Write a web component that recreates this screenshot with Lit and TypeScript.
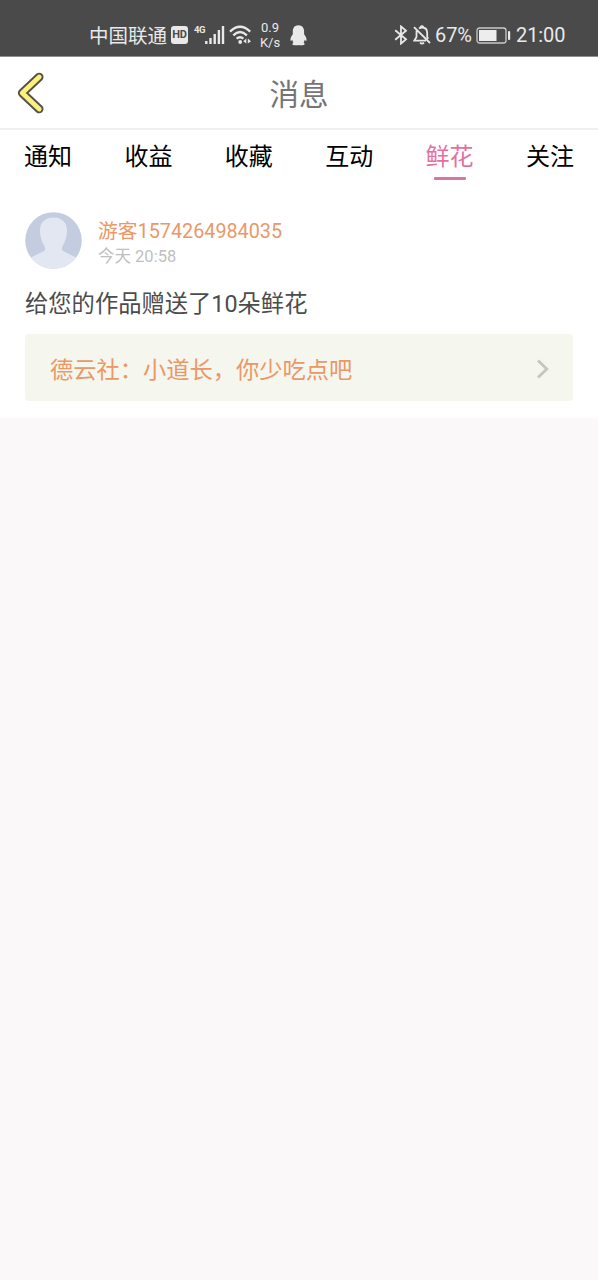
import { LitElement, html, css } from "lit";
import { customElement, property } from "lit/decorators.js";

@customElement("status-bar")
class StatusBar extends LitElement {
  static styles = css`
    :host {
      display: flex;
      align-items: center;
      box-sizing: border-box;
      height: 56px;
      padding: 14px 33px 0 89px;
      background: #4a4a4a;
      color: #e9e9e9;
      font-family: Roboto, "Noto Sans CJK SC", sans-serif;
      white-space: nowrap;
      line-height: 1;
    }
    svg { display: block; flex: none; }
    .carrier { font-size: 19.5px; width: 78px; padding-top: 3px; }
    .hd {
      width: 17px;
      height: 18px;
      margin-left: 4px;
      border-radius: 3px;
      background: #e9e9e9;
      color: #4a4a4a;
      font-size: 11px;
      font-weight: 700;
      line-height: 18px;
      text-align: center;
      letter-spacing: -0.2px;
    }
    .gen {
      width: 11px;
      margin-left: 6px;
      align-self: flex-start;
      padding-top: 11px;
      font-size: 9.5px;
      font-weight: 700;
      letter-spacing: -0.5px;
    }
    .wifi { margin-left: 4px; }
    .speed {
      width: 22px;
      margin-left: 7px;
      font-size: 13px;
      line-height: 15px;
      text-align: center;
    }
    .qq { margin-left: 9px; }
    .right { display: flex; align-items: center; margin-left: auto; }
    .bell { margin-left: 5px; }
    .num { font-size: 20px; letter-spacing: -0.1px; }
    .pct { width: 36px; margin-left: 4px; }
    .battery { margin-left: 5px; }
    .clock { width: 49px; margin-left: 5px; }
  `;

  render() {
    return html`
      <span class="carrier">中国联通</span>
      <span class="hd">HD</span>
      <span class="gen">4G</span>
      <svg width="20" height="20" viewBox="0 0 20 20" fill="none" stroke="#e9e9e9">
        <path d="M1.300 16v3M5.500 13v6M9.700 9v10M13.900 5v14M18 1v18" stroke-width="2.400" />
      </svg>
      <svg class="wifi" width="23" height="20" viewBox="0 0 23 20" fill="none" stroke="#e9e9e9">
        <path d="M1 6.600Q11 -3 21.200 6.600M4.300 10.300Q11 3.800 17.900 10.300M7.600 13.700Q11 10.700 14.400 13.700" stroke-width="2.300" />
        <circle cx="11.200" cy="17" r="1.900" fill="#e9e9e9" stroke="none" />
        <path d="M17.300 13.500v5l-3-2.300zM18.800 13.500v5l3.200-2.300z" fill="#e9e9e9" stroke="none" />
      </svg>
      <span class="speed">0.9<br />K/s</span>
      <svg class="qq" width="17" height="21" viewBox="0 0 17 21" fill="#e9e9e9">
        <path d="M8.400.300C4.600.300 2.800 3.200 2.800 6.300v3C1.300 11.300.200 13.500.500 15.300c.300 1.200 1.100.500 1.800-.600.300 1.300.600 2.200 1.100 3-.700.300-1.100.900-1 1.600.200 1.300 4.700 1 6.100.600 1.400.400 5.900.700 6.100-.600.100-.700-.300-1.300-1-1.600.500-.800.800-1.700 1.100-3 .700 1.100 1.500 1.800 1.800.600.300-1.800-.900-4-2.400-6v-3C14.100 3.200 12.200.300 8.400.300z" />
      </svg>
      <div class="right">
        <svg width="14" height="20" viewBox="0 0 14 20" fill="none" stroke="#e9e9e9" stroke-width="1.800">
          <path d="M1.200 5.300L12 14.300 7 18.600V1.400l5 4.300L1.200 14.700" />
        </svg>
        <svg class="bell" width="18" height="20" viewBox="0 0 18 20" fill="none" stroke="#e9e9e9" stroke-width="1.800">
          <path d="M1 2.200L17 18M3.500 5.700V12L1.200 15.700H13M6 3.600Q7 2.500 9 2.500q5.200 0 5.200 5.500v4l1 1.700" />
          <path d="M7.500 2q1.500-1.800 3 0M7 17.600q2 1.800 4 0" />
        </svg>
        <span class="num pct">67%</span>
        <svg class="battery" width="35" height="17" viewBox="0 0 35 17">
          <rect x="1" y="1" width="29" height="15" rx="2.500" fill="none" stroke="#c9c9c9" stroke-width="1.300" />
          <rect x="3" y="3" width="17.500" height="11" fill="#ededed" />
          <rect x="32" y="4" width="2.200" height="9" rx="1" fill="#e9e9e9" />
        </svg>
        <span class="num clock">21:00</span>
      </div>
    `;
  }
}

@customElement("nav-header")
class NavHeader extends LitElement {
  static styles = css`
    :host {
      display: grid;
      grid-template-columns: 60px 1fr 60px;
      align-items: center;
      box-sizing: border-box;
      height: 74px;
      background: #fff;
      border-top: 1px solid #8f8f8f;
      border-bottom: 2px solid #efefef;
    }
    svg { display: block; margin-left: 17px; }
    .title {
      text-align: center;
      font: 29.5px/40px "Noto Sans CJK SC", sans-serif;
      color: #757575;
      padding-bottom: 1px;
    }
  `;

  render() {
    return html`
      <svg width="28" height="42" viewBox="0 0 28 42" fill="none" stroke-linecap="round" stroke-linejoin="round">
        <path d="M22.200 5L5.200 21 22.200 37" stroke="#555149" stroke-width="8.600" />
        <path d="M22.200 5L5.200 21 22.200 37" stroke="#fbf27d" stroke-width="4.800" />
      </svg>
      <div class="title">消息</div>
    `;
  }
}

@customElement("tab-strip")
class TabStrip extends LitElement {
  @property({ type: Array }) tabs: string[] = [];
  @property() active = "";

  static styles = css`
    :host {
      display: flex;
      justify-content: space-between;
      box-sizing: border-box;
      height: 60px;
      padding: 7px 24px 0;
      background: #fff;
      font: 24px/36px "Noto Sans CJK SC", sans-serif;
      color: #000;
    }
    .tab { display: flex; flex-direction: column; align-items: center; }
    .on { color: #e56fa2; }
    .line { width: 32px; height: 3px; margin-top: 4px; border-radius: 1px; background: #dc74a2; }
  `;

  render() {
    return this.tabs.map((t) =>
      t === this.active
        ? html`<div class="tab on">${t}<span class="line"></span></div>`
        : html`<div class="tab">${t}</div>`
    );
  }
}

@customElement("flower-message")
class FlowerMessage extends LitElement {
  static styles = css`
    :host {
      display: block;
      box-sizing: border-box;
      height: 228px;
      padding: 22px 25px 0;
      background: #fff;
      font-family: Roboto, "Noto Sans CJK SC", sans-serif;
    }
    .user { display: flex; gap: 16px; }
    svg { display: block; flex: none; }
    .name { font-size: 19.8px; line-height: 26px; color: #ea9868; padding-top: 7px; }
    .time { font-size: 16.5px; line-height: 24px; color: #bfbfbf; }
    .text { margin-top: 17px; font-size: 23.3px; line-height: 36px; height: 36px; color: #4c4c4c; white-space: nowrap; }
    .work {
      display: flex;
      align-items: center;
      justify-content: space-between;
      box-sizing: border-box;
      height: 67px;
      margin-top: 12px;
      padding: 0 23px 0 25px;
      border-radius: 4px;
      background: #f5f6ed;
      color: #ea9868;
      font: 23.25px/34px "Noto Sans CJK SC", sans-serif;
    }
    .arrow { margin-top: 2px; }
  `;

  render() {
    return html`
      <div class="user">
        <svg width="57" height="57" viewBox="0 0 57 57">
          <defs><clipPath id="round"><circle cx="28.500" cy="28.500" r="28.300" /></clipPath></defs>
          <g clip-path="url(#round)">
            <rect width="57" height="57" fill="#c4cde0" />
            <path d="M28.500 5.500C19.500 5.500 15 11 15 18.500c0 7 2.300 12 4.300 15.300 1 2.700 1.200 4.200-.3 5.200L4 46.500V57h49V46.500L38 39c-1.500-1-1.300-2.500-.3-5.200C39.700 30.500 42 25.500 42 18.500 42 11 37.500 5.500 28.500 5.500z" fill="#e2e7f2" />
          </g>
        </svg>
        <div>
          <div class="name">游客1574264984035</div>
          <div class="time">今天 20:58</div>
        </div>
      </div>
      <div class="text">给您的作品赠送了10朵鲜花</div>
      <div class="work">
        <span>德云社：小道长，你少吃点吧</span>
        <svg class="arrow" width="14" height="20" viewBox="0 0 14 20" fill="none" stroke="#c5c6c0" stroke-width="2.800">
          <path d="M2 1.500L10.800 10 2 18.500" />
        </svg>
      </div>
    `;
  }
}

@customElement("app-root")
class AppRoot extends LitElement {
  static styles = css`
    :host { display: block; min-height: 1280px; background: #faf8f9; }
  `;

  render() {
    return html`
      <status-bar></status-bar>
      <nav-header></nav-header>
      <tab-strip .tabs=${["通知", "收益", "收藏", "互动", "鲜花", "关注"]} active="鲜花"></tab-strip>
      <flower-message></flower-message>
    `;
  }
}
